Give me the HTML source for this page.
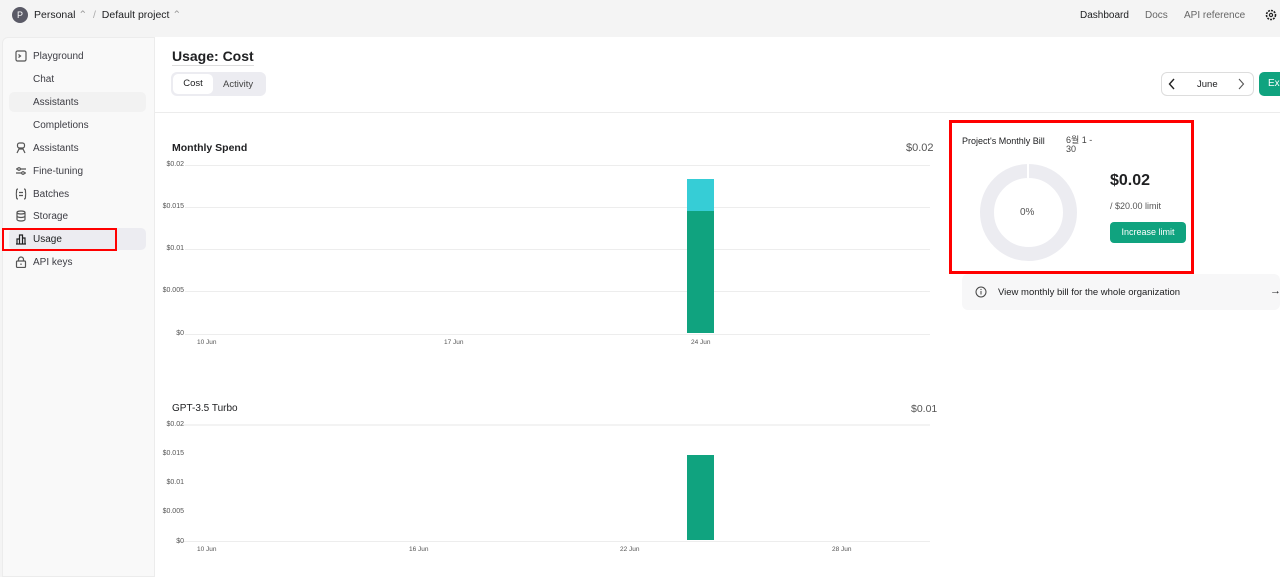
<!DOCTYPE html>
<html><head><meta charset="utf-8"><style>
*{box-sizing:border-box;margin:0;padding:0}
body{width:1280px;height:576px;overflow:hidden;background:#f4f4f4;font-family:"Liberation Sans","Noto Sans CJK KR",sans-serif;color:#202123;position:relative;font-size:13px}
.a{position:absolute}
.side{left:2px;top:37px;width:153px;height:540px;background:#f9f9f9;border:1px solid #ececec;border-radius:6px 0 0 0}
.nav{position:absolute;left:33px;font-size:10px;color:#3c3c43}
.ic{position:absolute;left:15px;width:12px;height:12px;stroke:#555;fill:none;stroke-width:1.2}
.main{left:155px;top:37px;width:1125px;height:540px;background:#fff}
.grid{position:absolute;height:1px;background:#ededed}
.yl{position:absolute;font-size:7px;color:#555;text-align:right;width:30px}
.xl{position:absolute;font-size:6.5px;color:#555}
</style></head><body>
<div class="a" style="left:12px;top:7px;width:16px;height:16px;border-radius:50%;background:#5a5a66;color:#fff;font-size:9px;text-align:center;line-height:16px">P</div>
<div class="a" style="left:34px;top:9px;font-size:10.5px;color:#202123">Personal <span style="color:#999">⌃</span> &nbsp;<span style="color:#aaa">/</span>&nbsp; Default project <span style="color:#999">⌃</span></div>
<div class="a" style="left:1080px;top:10px;font-size:10px;color:#202123">Dashboard</div>
<div class="a" style="left:1145px;top:10px;font-size:10px;color:#666">Docs</div>
<div class="a" style="left:1184px;top:10px;font-size:10px;color:#666">API reference</div>
<svg class="a" style="left:1265px;top:9px" width="12" height="12" viewBox="0 0 12 12"><circle cx="6" cy="6" r="4.5" fill="none" stroke="#222" stroke-width="1.6" stroke-dasharray="2 1"/><circle cx="6" cy="6" r="1.6" fill="none" stroke="#222" stroke-width="1.2"/></svg>

<div class="a side"></div>
<div class="a" style="left:9px;top:92px;width:137px;height:20px;background:#f2f2f2;border-radius:5px"></div>
<div class="a" style="left:9px;top:228px;width:137px;height:22px;background:#ececf1;border-radius:5px"></div>
<div class="a" style="left:2px;top:228px;width:115px;height:23px;border:2.5px solid #f00"></div>
<svg class="ic" style="top:50px" viewBox="0 0 12 12"><rect x="1" y="1" width="10" height="10" rx="1.5"/><path d="M3.5 4.5l2 1.5-2 1.5"/></svg>
<div class="nav" style="top:51px">Playground</div>
<div class="nav" style="top:74px">Chat</div>
<div class="nav" style="top:97px">Assistants</div>
<div class="nav" style="top:120px">Completions</div>
<svg class="ic" style="top:142px" viewBox="0 0 12 12"><rect x="2.5" y="1" width="7" height="5" rx="2"/><path d="M2 11l2-4h4l2 4"/></svg>
<div class="nav" style="top:143px">Assistants</div>
<svg class="ic" style="top:165px" viewBox="0 0 12 12"><path d="M1 4h10M1 8h10"/><circle cx="4" cy="4" r="1.3" fill="#fff"/><circle cx="8" cy="8" r="1.3" fill="#fff"/></svg>
<div class="nav" style="top:166px">Fine-tuning</div>
<svg class="ic" style="top:188px" viewBox="0 0 12 12"><path d="M3 1C1.5 1 1.5 2 1.5 4S1 6 .8 6c.2 0 .7 0 .7 2s0 3 1.5 3M9 1c1.5 0 1.5 1 1.5 3s.5 2 .7 2c-.2 0-.7 0-.7 2s0 3-1.5 3M4 4.5h4M4 7.5h4"/></svg>
<div class="nav" style="top:189px">Batches</div>
<svg class="ic" style="top:210px" viewBox="0 0 12 12"><ellipse cx="6" cy="2.5" rx="4" ry="1.5"/><path d="M2 2.5v7c0 .8 1.8 1.5 4 1.5s4-.7 4-1.5v-7M2 6c0 .8 1.8 1.5 4 1.5S10 6.8 10 6"/></svg>
<div class="nav" style="top:211px">Storage</div>
<svg class="ic" style="top:233px;stroke:#202123" viewBox="0 0 12 12"><path d="M1 11h10M2 11V6h2.5v5M4.5 11V2h3v9M7.5 11V5H10v6"/></svg>
<div class="nav" style="top:234px;color:#202123">Usage</div>
<svg class="ic" style="top:256px" viewBox="0 0 12 12"><rect x="1.5" y="5" width="9" height="6.5" rx="1"/><path d="M3.5 5V3.5a2.5 2.5 0 015 0V5M6 7.5v1.5"/></svg>
<div class="nav" style="top:257px">API keys</div>

<div class="a main"></div>
<div class="a" style="left:172px;top:48px;font-size:14px;font-weight:bold;color:#202123;border-bottom:1px solid #ddd;padding-bottom:1px">Usage: Cost</div>
<div class="a" style="left:171px;top:72px;width:95px;height:24px;background:#ececf1;border-radius:6px"></div>
<div class="a" style="left:173px;top:74px;width:40px;height:20px;background:#fff;border-radius:5px;font-size:9.5px;text-align:center;line-height:20px">Cost</div>
<div class="a" style="left:223px;top:79px;font-size:9.5px;color:#444">Activity</div>
<div class="a" style="left:1161px;top:72px;width:93px;height:24px;border:1px solid #ddd;border-radius:6px;background:#fff"></div>
<svg class="a" style="left:1168px;top:78px" width="8" height="12" viewBox="0 0 8 12"><path d="M6 1L1.5 6 6 11" fill="none" stroke="#222" stroke-width="1.4"/></svg>
<div class="a" style="left:1197px;top:79px;font-size:9.5px">June</div>
<svg class="a" style="left:1237px;top:78px" width="8" height="12" viewBox="0 0 8 12"><path d="M2 1l4.5 5L2 11" fill="none" stroke="#555" stroke-width="1.1"/></svg>
<div class="a" style="left:1259px;top:72px;width:30px;height:24px;background:#10a37f;border-radius:5px;color:#fff;font-size:10px;line-height:24px;padding-left:9px">Ex</div>
<div class="a" style="left:155px;top:112px;width:1125px;height:1px;background:#ececec"></div>

<!-- chart1 -->
<div class="a" style="left:172px;top:142px;font-size:10.5px;font-weight:bold">Monthly Spend</div>
<div class="a" style="left:906px;top:142px;font-size:11px;color:#555">$0.02</div>
<div class="grid" style="left:185px;top:165px;width:745px"></div>
<div class="grid" style="left:185px;top:207px;width:745px"></div>
<div class="grid" style="left:185px;top:249px;width:745px"></div>
<div class="grid" style="left:185px;top:291px;width:745px"></div>
<div class="grid" style="left:185px;top:334px;width:745px"></div>
<div class="yl" style="left:154px;top:161px">$0.02</div>
<div class="yl" style="left:154px;top:203px">$0.015</div>
<div class="yl" style="left:154px;top:245px">$0.01</div>
<div class="yl" style="left:154px;top:287px">$0.005</div>
<div class="yl" style="left:154px;top:330px">$0</div>
<div class="xl" style="left:197px;top:339px">10 Jun</div>
<div class="xl" style="left:444px;top:339px">17 Jun</div>
<div class="xl" style="left:691px;top:339px">24 Jun</div>
<div class="a" style="left:687px;top:179px;width:27px;height:32px;background:#36cdd6"></div>
<div class="a" style="left:687px;top:211px;width:27px;height:122px;background:#10a37f"></div>

<!-- chart2 -->
<div class="a" style="left:172px;top:403px;font-size:10px">GPT-3.5 Turbo</div>
<div class="a" style="left:911px;top:403px;font-size:10.5px;color:#555">$0.01</div>
<div class="grid" style="left:178px;top:424px;width:752px;background:#f3f3f3;height:2px"></div>
<div class="grid" style="left:178px;top:541px;width:752px"></div>
<div class="yl" style="left:154px;top:421px">$0.02</div>
<div class="yl" style="left:154px;top:450px">$0.015</div>
<div class="yl" style="left:154px;top:479px">$0.01</div>
<div class="yl" style="left:154px;top:508px">$0.005</div>
<div class="yl" style="left:154px;top:538px">$0</div>
<div class="xl" style="left:197px;top:546px">10 Jun</div>
<div class="xl" style="left:409px;top:546px">16 Jun</div>
<div class="xl" style="left:620px;top:546px">22 Jun</div>
<div class="xl" style="left:832px;top:546px">28 Jun</div>
<div class="a" style="left:687px;top:455px;width:27px;height:85px;background:#10a37f"></div>

<!-- bill -->
<div class="a" style="left:949px;top:120px;width:245px;height:154px;border:3px solid #f00;background:#fff"></div>
<div class="a" style="left:962px;top:136px;font-size:9px">Project's Monthly Bill</div>
<div class="a" style="left:1066px;top:136px;font-size:9px;line-height:9px;color:#444">6월 1 -<br>30</div>
<div class="a" style="left:980px;top:164px;width:97px;height:97px;border-radius:50%;border:14px solid #ececf1"></div>
<div class="a" style="left:1027px;top:163px;width:2px;height:15px;background:#fff"></div>
<div class="a" style="left:1020px;top:207px;font-size:10px;color:#555">0%</div>
<div class="a" style="left:1110px;top:172px;font-size:16px;font-weight:bold">$0.02</div>
<div class="a" style="left:1110px;top:201px;font-size:9px;color:#555">/ $20.00 limit</div>
<div class="a" style="left:1110px;top:222px;width:76px;height:21px;background:#10a37f;border-radius:4px;color:#fff;font-size:9px;text-align:center;line-height:21px">Increase limit</div>
<div class="a" style="left:962px;top:274px;width:318px;height:36px;background:#f7f7f8;border-radius:6px"></div>
<svg class="a" style="left:975px;top:286px" width="12" height="12" viewBox="0 0 12 12"><circle cx="6" cy="6" r="5" fill="none" stroke="#444" stroke-width="1"/><path d="M6 5v3.5" stroke="#444"/><circle cx="6" cy="3.5" r=".6" fill="#444"/></svg>
<div class="a" style="left:998px;top:287px;font-size:9.5px">View monthly bill for the whole organization</div>
<div class="a" style="left:1270px;top:285px;font-size:11px">→</div>
</body></html>
